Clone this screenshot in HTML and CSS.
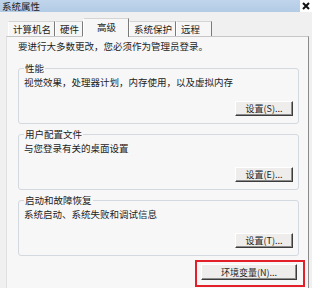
FILE: index.html
```html
<!DOCTYPE html>
<html lang="zh-CN">
<head>
  <meta charset="UTF-8" />
  <meta name="viewport" content="width=device-width, initial-scale=1.0" />
  <title>系统属性</title>
  <link rel="stylesheet" href="styles.css">
</head>
<body>

  <div class="window">
    <div class="titlebar">
      <span class="title">系统属性</span>
      <span class="close">
        <svg width="12" height="12" viewBox="0 0 12 12"><path d="M3 3 L9 9 M9 3 L3 9" stroke="#111" stroke-width="2" /></svg>
      </span>
    </div>

    <!-- tab strip -->
    <div class="tabs">
      <div class="tab">计算机名</div>
      <div class="tab">硬件</div>
      <div class="tab active">高级</div>
      <div class="tab">系统保护</div>
      <div class="tab last">远程</div>
    </div>

    <div class="panel">
      <p class="intro">要进行大多数更改，您必须作为管理员登录。</p>

      <fieldset class="group">
        <legend>性能</legend>
        <p>视觉效果，处理器计划，内存使用，以及虚拟内存</p>
        <div class="actions"><button class="btn">设置(S)...</button></div>
      </fieldset>

      <fieldset class="group">
        <legend>用户配置文件</legend>
        <p>与您登录有关的桌面设置</p>
        <div class="actions"><button class="btn">设置(E)...</button></div>
      </fieldset>

      <fieldset class="group">
        <legend>启动和故障恢复</legend>
        <p>系统启动、系统失败和调试信息</p>
        <div class="actions"><button class="btn">设置(T)...</button></div>
      </fieldset>

      <div class="actions">
        <div class="highlight"><button class="btn wide">环境变量(N)...</button></div>
      </div>
    </div>
  </div>

</body>
</html>
```

FILE: styles.css
```css
body {
  margin: 0;
  padding: 0;
  background: #f0f0f0;
  font-family: "Noto Sans CJK SC", "DejaVu Sans", sans-serif;
  font-size: 9.5px;
  color: #1c1c1c;
  overflow: hidden;
}
.window {
  width: 312px;
  height: 288px;
  overflow: hidden;
}
.titlebar {
  height: 12px;
  display: flex;
  justify-content: space-between;
  align-items: center;
  background: linear-gradient(#c0d5ec, #b3cbe6);
}
.title {
  padding-left: 2px;
  line-height: 12px;
}
.close {
  width: 12px;
  height: 12px;
  background: #fff;
}
.close svg {
  display: block;
}
.tabs {
  display: flex;
  align-items: flex-end;
  height: 18px;
  margin-top: 6px;
  padding-left: 8px;
}
.tab {
  height: 14px;
  line-height: 14px;
  padding: 0 3px 0 4px;
  border-top: 1px solid #d4d4d4;
  border-left: 1px solid #fff;
  border-right: 1px solid #7a7a7a;
  background: #f6f6f6;
}
.tab.active {
  height: 18px;
  line-height: 16px;
  padding: 0 12px 0 13px;
  margin-bottom: -1px;
  border-top: 1px solid #d4d4d4;
  background: #f7f7f7;
  position: relative;
  z-index: 1;
}
.tab.last {
  padding-right: 11px;
}
.panel {
  margin: 0 3px 0 6px;
  height: 260px;
  padding: 0 9px 0 11px;
  background: #f7f7f7;
  border-top: 1px solid #c6c6c6;
  border-left: 1px solid #e0e0e0;
  border-right: 1px solid #8a8a8a;
}
.intro {
  margin: 3px 0 0;
  line-height: 12px;
}
.group {
  margin: 10px 0 0;
  padding: 0 5px 7px 5px;
  border: 1px solid #d3d9de;
  border-radius: 3px;
}
.group + .group {
  margin-top: 4px;
}
.group legend {
  padding: 0 1px;
  line-height: 12px;
}
.group p {
  margin: 2px 0 0;
  line-height: 12px;
}
.actions {
  display: flex;
  justify-content: flex-end;
  margin-top: 13px;
}
.btn {
  width: 58px;
  height: 15px;
  padding: 0;
  font-family: inherit;
  font-size: 9px;
  color: #1c1c1c;
  background: #eeedeb;
  border: 1px solid;
  border-color: #fff #3c3c3c #3c3c3c #fff;
  box-shadow: inset -1px -1px #8c8c8c;
}
.btn.wide {
  width: 96px;
  height: 16px;
}
.highlight {
  margin-top: -9px;
  margin-right: -6px;
  padding: 2px 6px 5px 4px;
  border: 2px solid #e3202a;
}
```
